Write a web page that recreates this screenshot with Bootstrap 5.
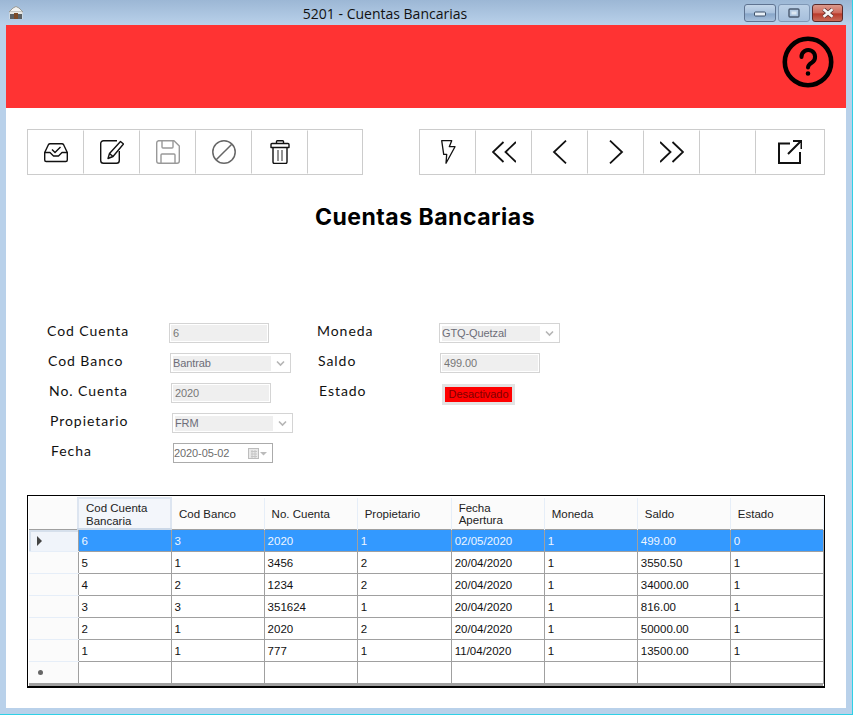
<!DOCTYPE html>
<html lang="en">
<head>
    <meta charset="UTF-8">
    <title>5201 - Cuentas Bancarias</title>
    <link href="https://cdn.jsdelivr.net/npm/bootstrap@5.3.0/dist/css/bootstrap.min.css" rel="stylesheet">
    <style>
        html, body { height: 100%; }
        body { background: #fff; overflow: hidden; font-family: "Liberation Sans", Arial, sans-serif; }
        .win-frame { width: 853px; height: 715px; background: #b9d1ea; border-right: 1px solid #2fd0e6; border-bottom: 1px solid #2fd0e6; }
        .win-title { height: 25px; background: linear-gradient(#9cb7d5, #b9d1ea); position: relative; }
        .win-title-text { font-family: "Open Sans", sans-serif; font-size: 14px; color: #111; width: 722px; text-align: center; line-height: 27px; }
        .win-logo { margin-left: 8px; margin-top: 6px; }
        .win-btn { width: 32px; height: 18px; border: 1px solid #5f7391; border-radius: 3px; background: linear-gradient(#c4d6ea 0%, #a9c1dd 50%, #88a6c9 55%, #a7c0dc 100%); margin-right: 2px; }
        .win-btn.max-btn { background: linear-gradient(#bcd0e6, #a6bfdc); border-color: #7f97b5; }
        .win-btn.close-btn { width: 31px; background: linear-gradient(#dc9a8c 0%, #cf6a5c 50%, #b83a2a 55%, #c96a58 100%); border-color: #5a2a2a; margin-right: 0; }
        .win-btns { position: absolute; left: 744px; top: 4px; }
        .win-body { margin: 0 6px; width: 840px; height: 683px; background: #fff; }
        .top-band { height: 83px; background: #ff3333; padding: 11px 12px 0 0; }
        .tool-strip { margin: 21px 0 0 21px; width: 798px; }
        .tool-set { border: 1px solid #ccc; height: 46px; }
        .tool-cell { width: 56px; border-right: 1px solid #ccc; padding: 0 1px 0 0; border-radius: 0; background: #fff; }
        .tool-cell:last-child { border-right: 0; }
        .tool-cell.short-cell { width: 54px; }
        .tool-cell.wide-cell { width: 68px; }
        .page-head { font-family: "Inter", sans-serif; font-weight: 700; font-size: 23px; letter-spacing: .5px; color: #000; text-align: center; width: 838px; margin: 27px 0 0 0; line-height: 30px; }
        .form-zone { margin: 91px 0 0 0; height: 172px; }
        .frm-col { width: 270px; margin-left: 41px; }
        .frm-col + .frm-col { margin-left: 0; }
        .frm-line { height: 30px; }
        .frm-line:nth-child(2) { margin-left: 1px; }
        .frm-line:nth-child(3) { margin-left: 2px; }
        .frm-line:nth-child(4) { margin-left: 3px; }
        .frm-line:nth-child(5) { margin-left: 4px; }
        .frm-label { width: 122px; font-family: "Lato", sans-serif; font-size: 14px; letter-spacing: .95px; color: #111; line-height: 16px; }
        .frm-input.form-control { width: 100px; height: 20px; padding: 0 2px 0 3px; border: 1px solid #d4d4d4; border-radius: 0; background: #efefef; box-shadow: inset 0 0 0 1px #fff; font-size: 11px; letter-spacing: -.1px; color: #777; line-height: 18px; }
        .frm-input.form-control:disabled { background: #efefef; opacity: 1; }
        .frm-pick { width: 121px; height: 20px; border: 1px solid #d4d4d4; padding: 2px 1px 1px 2px; font-size: 11px; letter-spacing: -.1px; color: #6d6d78; line-height: 15px; background: #fff; }
        .frm-pick-val { background: #efefef; width: 98px; height: 15px; overflow: hidden; }
        .frm-date { width: 100px; height: 20px; border: 1px solid #ababab; font-size: 11px; letter-spacing: -.1px; color: #6d6d6d; line-height: 18px; background: #fff; }
        .frm-flag { width: 73px; height: 21px; margin-left: 1px; border: 3px solid #e3e3e3; background: #f00; color: #800000; font-size: 11px; letter-spacing: -.05px; line-height: 15px; text-align: center; margin-top: 1px; }
        .grid-wrap { margin: 0 0 0 21px; width: 798px; height: 193px; border: 1px solid #000; padding: 1px 1px 3px 1px; background: #fff; border-bottom-width: 2px; position: relative; overflow: hidden; }
        .grid-wrap::after { content: ""; display: block; position: absolute; left: 1px; right: 1px; bottom: 0; height: 3px; background: #a0a0a0; }
        .grid-tbl.table { table-layout: fixed; width: 795px; margin: 0; font-size: 11.5px; color: #111; border-collapse: collapse; }
        .grid-tbl.table > :not(caption) > * > * { padding: 1px 0 0 3px; border: 1px solid #a0a0a0; height: 22px; line-height: 14px; vertical-align: middle; white-space: nowrap; box-shadow: none; }
        .grid-tbl.table thead th { height: 31px; font-weight: 400; font-size: 11.5px; border: 0; border-right: 1px solid #e6eef8; background: #fbfbfb; color: #222; padding-left: 7px; padding-top: 2px; line-height: 12.5px; white-space: normal; }
        .grid-tbl.table thead th.first-head { background: #f3f6fb; border: 2px solid #dde5f0; border-bottom-color: #cbd8e8; }
        .grid-tbl.table thead tr { border-bottom: 1px solid #a0a0a0; }
        .grid-tbl.table .side-cell { width: 49px; border: 0; border-bottom: 1px solid #e6eef8; border-right: 1px solid #a0a0a0; background: #fbfbfb; padding: 0; text-align: center; }
        .grid-tbl.table .sel-line > td { background: #3399ff; color: #eef6ff; }
        .grid-tbl.table .sel-line > .side-cell { background: #f0f4fa; box-shadow: inset 2px 2px 0 #d6e0ec; }
        .side-arrow { display: inline-block; border-left: 5px solid #444; border-top: 5px solid transparent; border-bottom: 5px solid transparent; margin-right: 28px; vertical-align: middle; }
        .side-star { display: inline-block; width: 5px; height: 5px; border-radius: 50%; background: #666; margin-right: 26px; vertical-align: middle; }
    </style>
</head>
<body>
    <div class="win-frame">
        <div class="win-title d-flex">
            <svg class="win-logo flex-shrink-0" width="16" height="14" viewBox="0 0 16 14">
                <path d="M1 6 L5 2 L8 .5 L11 2 L15 6 Z" fill="#f2f2f0" stroke="#9a9a96"/>
                <rect x="1.500" y="6" width="13" height="7" fill="#e8e8e4"/>
                <rect x="2" y="8" width="12" height="5" fill="#5c5f62"/>
                <rect x="6" y="7" width="4" height="6" fill="#7d4a26"/>
            </svg>
            <div class="win-title-text flex-shrink-0">5201 - Cuentas Bancarias</div>
            <div class="win-btns d-flex">
                <div class="win-btn d-flex align-items-center justify-content-center">
                    <svg width="14" height="8" viewBox="0 0 14 8"><rect x="1.500" y="3" width="11" height="4" rx="1" fill="#e8f0f8" stroke="#3d4f68"/></svg>
                </div>
                <div class="win-btn max-btn d-flex align-items-center justify-content-center">
                    <svg width="12" height="10" viewBox="0 0 12 10"><rect x="1" y="1" width="10" height="8" rx="1" fill="none" stroke="#4a5a70" stroke-width="1.400"/><rect x="3.500" y="3.500" width="5" height="3" fill="#dde7f2"/></svg>
                </div>
                <div class="win-btn close-btn d-flex align-items-center justify-content-center">
                    <svg width="14" height="10" viewBox="0 0 14 10"><path d="M2.500 1.200 L11.500 8.800 M11.500 1.200 L2.500 8.800" stroke="#5a3030" stroke-width="4"/><path d="M2.500 1.200 L11.500 8.800 M11.500 1.200 L2.500 8.800" stroke="#f6f6f6" stroke-width="2.600"/></svg>
                </div>
            </div>
        </div>
        <div class="win-body">
            <div class="top-band d-flex justify-content-end">
                <svg width="52" height="52" viewBox="0 0 52 52" fill="none" stroke="#000" stroke-width="4.600" stroke-linecap="round">
                    <circle cx="26" cy="26" r="23.200"/>
                    <path d="M19.500 21 a6.800 6.800 0 1 1 10.500 5.500 c-2.600 1.600 -4 2.500 -4 5" stroke-width="4"/>
                    <circle cx="26" cy="37.500" r="1" fill="#000" stroke-width="2.600"/>
                </svg>
            </div>

            <div class="tool-strip d-flex justify-content-between">
                <div class="tool-set d-flex">
                    <button class="btn tool-cell" type="button">
                        <svg width="24" height="24" viewBox="0 0 24 24" fill="none" stroke="#111" stroke-width="1.400" stroke-linejoin="round">
                            <path d="M.7 12.500 L4.500 4.500 a2 2 0 0 1 1.500-.8 H18 a2 2 0 0 1 1.500.8 L23.300 12.500 V20 a1.500 1.500 0 0 1-1.500 1.500 H2.200 A1.500 1.500 0 0 1 .7 20 Z"/>
                            <path d="M.7 12.500 H6 L9.500 16 H14.500 L18 12.500 H23.300"/>
                            <path d="M8 9.500 l3 3 l5.500-5.500"/>
                        </svg>
                    </button>
                    <button class="btn tool-cell" type="button">
                        <svg width="24" height="24" viewBox="0 0 24 24" fill="none" stroke="#111" stroke-width="1.400" stroke-linejoin="round">
                            <path d="M17 .7 H3.500 a2.800 2.800 0 0 0-2.800 2.800 V20.500 a2.800 2.800 0 0 0 2.800 2.800 H16.500 a2.800 2.800 0 0 0 2.800-2.800 V11"/>
                            <path d="M20.500 1.500 L23.500 4 L13 16.500 L8 18.500 L9.500 13.500 Z"/>
                            <path d="M9.500 13.500 L13 16.500"/>
                        </svg>
                    </button>
                    <button class="btn tool-cell" type="button">
                        <svg width="24" height="24" viewBox="0 0 24 24" fill="none" stroke="#999" stroke-width="1.400" stroke-linejoin="round">
                            <path d="M2.500.7 H18 L23.300 6 V21 a2.300 2.300 0 0 1-2.300 2.300 H3 A2.300 2.300 0 0 1 .7 21 V3 A2.300 2.300 0 0 1 2.500.7 Z"/>
                            <path d="M6 .7 V7 a1 1 0 0 0 1 1 H16 a1 1 0 0 0 1-1 V.7"/>
                            <path d="M5 23.300 V15 a1 1 0 0 1 1-1 H18 a1 1 0 0 1 1 1 V23.300"/>
                        </svg>
                    </button>
                    <button class="btn tool-cell" type="button">
                        <svg width="24" height="24" viewBox="0 0 24 24" fill="none" stroke="#666" stroke-width="1.500">
                            <circle cx="12" cy="12" r="11.200"/>
                            <path d="M4.200 19.800 L19.800 4.200"/>
                        </svg>
                    </button>
                    <button class="btn tool-cell" type="button">
                        <svg width="24" height="24" viewBox="0 0 24 24" fill="none" stroke="#111" stroke-width="1.400" stroke-linejoin="round">
                            <path d="M5 7.700 V22 a1.500 1.500 0 0 0 1.500 1.500 H17.500 a1.500 1.500 0 0 0 1.500-1.500 V7.700"/>
                            <path d="M4 3.500 H20 a1 1 0 0 1 1 1 V7.500 H3 V4.500 a1 1 0 0 1 1-1 Z"/>
                            <path d="M8.500 3.500 V1.500 a.8.8 0 0 1 .8-.8 H14.700 a.8.8 0 0 1 .8.8 V3.500"/>
                            <path d="M10 10 V21 M14 10 V21" stroke="#666"/>
                        </svg>
                    </button>
                    <button class="btn tool-cell short-cell" type="button" aria-label="vacio"></button>
                </div>
                <div class="tool-set d-flex">
                    <button class="btn tool-cell" type="button">
                        <svg width="24" height="24" viewBox="0 0 24 24" fill="none" stroke="#111" stroke-width="1.300" stroke-linejoin="round">
                            <path d="M5.700 .7 H15.700 L13.300 6.700 H19 L10 23.300 L10.700 14.300 H7.700 Z"/>
                        </svg>
                    </button>
                    <button class="btn tool-cell" type="button">
                        <svg width="24" height="24" viewBox="0 0 24 24" fill="none" stroke="#111" stroke-width="1.800">
                            <path d="M11.500 2 L1 12 L11.500 22 M24 2 L13.500 12 L24 22"/>
                        </svg>
                    </button>
                    <button class="btn tool-cell" type="button">
                        <svg width="24" height="24" viewBox="0 0 24 24" fill="none" stroke="#111" stroke-width="1.800">
                            <path d="M18 .7 L6 12 L18 23.300"/>
                        </svg>
                    </button>
                    <button class="btn tool-cell" type="button">
                        <svg width="24" height="24" viewBox="0 0 24 24" fill="none" stroke="#111" stroke-width="1.800">
                            <path d="M6 .7 L18 12 L6 23.300"/>
                        </svg>
                    </button>
                    <button class="btn tool-cell" type="button">
                        <svg width="24" height="24" viewBox="0 0 24 24" fill="none" stroke="#111" stroke-width="1.800">
                            <path d="M0 2 L10.500 12 L0 22 M12.500 2 L23 12 L12.500 22"/>
                        </svg>
                    </button>
                    <button class="btn tool-cell" type="button" aria-label="vacio"></button>
                    <button class="btn tool-cell wide-cell" type="button">
                        <svg width="24" height="24" viewBox="0 0 24 24" fill="none" stroke="#111" stroke-width="2">
                            <path d="M12 3.500 H1 V23 H22 V12"/>
                            <path d="M10 14 L23 1 M15 1 H23.500 V9"/>
                        </svg>
                    </button>
                </div>
            </div>

            <h1 class="page-head">Cuentas Bancarias</h1>

            <div class="form-zone d-flex">
                <div class="frm-col">
                    <div class="frm-line d-flex">
                        <div class="frm-label">Cod Cuenta</div>
                        <input class="form-control frm-input" type="text" value="6" disabled>
                    </div>
                    <div class="frm-line d-flex">
                        <div class="frm-label">Cod Banco</div>
                        <div class="frm-pick d-flex justify-content-between"><div class="frm-pick-val">Bantrab</div>
                            <svg class="me-1 mt-1" width="9" height="7" viewBox="0 0 9 7"><path d="M1 1.500 L4.500 5 L8 1.500" fill="none" stroke="#b5b5b5" stroke-width="1.600"/></svg></div>
                    </div>
                    <div class="frm-line d-flex">
                        <div class="frm-label">No. Cuenta</div>
                        <input class="form-control frm-input" type="text" value="2020" disabled>
                    </div>
                    <div class="frm-line d-flex">
                        <div class="frm-label">Propietario</div>
                        <div class="frm-pick d-flex justify-content-between"><div class="frm-pick-val">FRM</div>
                            <svg class="me-1 mt-1" width="9" height="7" viewBox="0 0 9 7"><path d="M1 1.500 L4.500 5 L8 1.500" fill="none" stroke="#b5b5b5" stroke-width="1.600"/></svg></div>
                    </div>
                    <div class="frm-line d-flex">
                        <div class="frm-label">Fecha</div>
                        <div class="frm-date d-flex justify-content-between"><span>2020-05-02</span>
                            <svg class="me-1 mt-1" width="20" height="11" viewBox="0 0 20 11"><rect x=".5" y=".5" width="10" height="10" fill="#e9e9e9" stroke="#bdbdbd"/><path d="M3 3.500h6M3 6h6M3 8.500h6M4 2v8M7 2v8" stroke="#c6c6c6"/><path d="M12 4 H19 L15.500 7.500 Z" fill="#bbb"/></svg></div>
                    </div>
                </div>
                <div class="frm-col">
                    <div class="frm-line d-flex">
                        <div class="frm-label">Moneda</div>
                        <div class="frm-pick d-flex justify-content-between"><div class="frm-pick-val">GTQ-Quetzal</div>
                            <svg class="me-1 mt-1" width="9" height="7" viewBox="0 0 9 7"><path d="M1 1.500 L4.500 5 L8 1.500" fill="none" stroke="#b5b5b5" stroke-width="1.600"/></svg></div>
                    </div>
                    <div class="frm-line d-flex">
                        <div class="frm-label">Saldo</div>
                        <input class="form-control frm-input" type="text" value="499.00" disabled>
                    </div>
                    <div class="frm-line d-flex">
                        <div class="frm-label">Estado</div>
                        <div class="frm-flag">Desactivado</div>
                    </div>
                </div>
            </div>

            <div class="grid-wrap">
                <table class="table grid-tbl">
                    <colgroup>
                        <col style="width:49px">
                        <col span="3" style="width:93px">
                        <col style="width:94px">
                        <col span="4" style="width:93px">
                    </colgroup>
                    <thead>
                        <tr>
                            <th class="side-head"></th>
                            <th class="first-head">Cod Cuenta<br>Bancaria</th>
                            <th>Cod Banco</th>
                            <th>No. Cuenta</th>
                            <th>Propietario</th>
                            <th>Fecha<br>Apertura</th>
                            <th>Moneda</th>
                            <th>Saldo</th>
                            <th>Estado</th>
                        </tr>
                    </thead>
                    <tbody id="gridBody"></tbody>
                </table>
            </div>
        </div>
    </div>

    <script src="https://cdn.jsdelivr.net/npm/bootstrap@5.3.0/dist/js/bootstrap.bundle.min.js"></script>
    <script>
        const cuentas = [
            [6, 3, '2020', 1, '02/05/2020', 1, '499.00', 0],
            [5, 1, '3456', 2, '20/04/2020', 1, '3550.50', 1],
            [4, 2, '1234', 2, '20/04/2020', 1, '34000.00', 1],
            [3, 3, '351624', 1, '20/04/2020', 1, '816.00', 1],
            [2, 1, '2020', 2, '20/04/2020', 1, '50000.00', 1],
            [1, 1, '777', 1, '11/04/2020', 1, '13500.00', 1]
        ];
        const body = document.getElementById('gridBody');
        cuentas.forEach((fila, i) => {
            const tr = document.createElement('tr');
            if (i === 0) tr.className = 'sel-line';
            const side = i === 0 ? '<span class="side-arrow"></span>' : '';
            tr.innerHTML = '<td class="side-cell">' + side + '</td>' + fila.map(v => '<td>' + v + '</td>').join('');
            body.appendChild(tr);
        });
        // fila vacia del final
        const nueva = document.createElement('tr');
        nueva.innerHTML = '<td class="side-cell"><span class="side-star"></span></td>' + '<td></td>'.repeat(8);
        body.appendChild(nueva);
    </script>
</body>
</html>
